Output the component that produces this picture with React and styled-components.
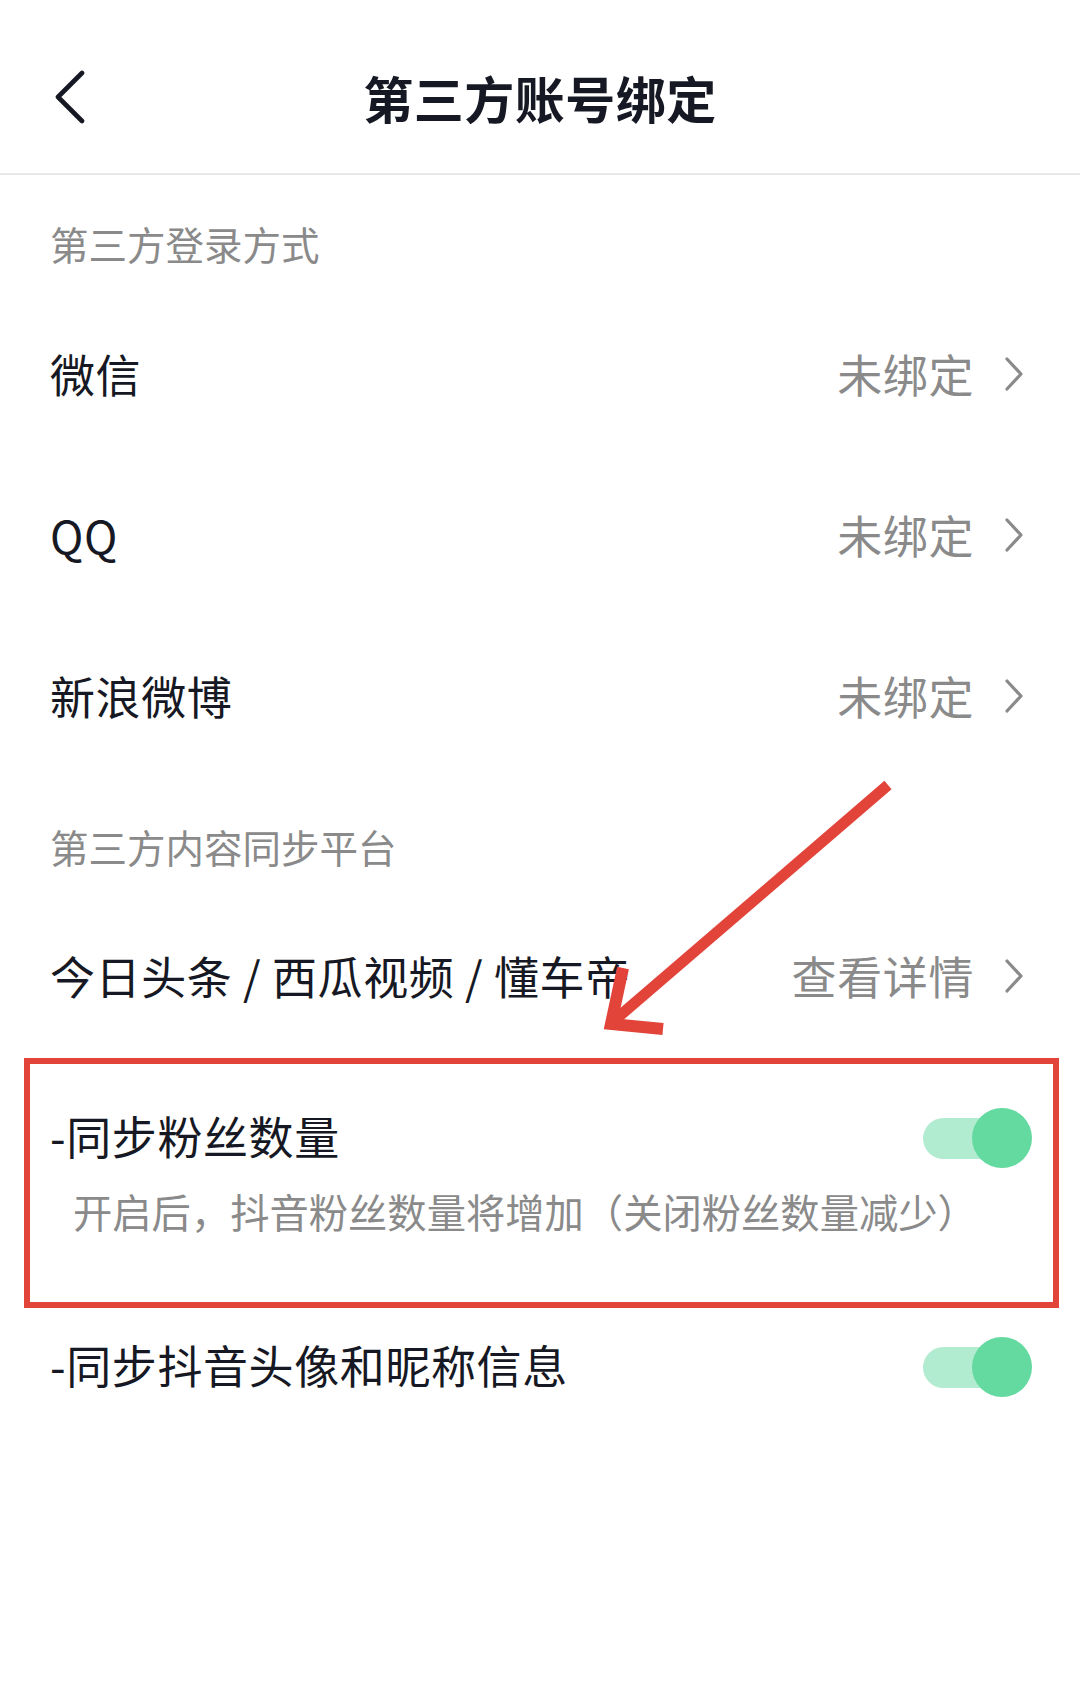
import React from 'react';
import styled, { createGlobalStyle } from 'styled-components';

const GlobalStyle = createGlobalStyle`
  html, body {
    margin: 0;
    padding: 0;
    background: #ffffff;
  }
  body {
    font-family: "Noto Sans CJK SC", "Noto Sans", sans-serif;
    color: #161823;
  }
`;

const Page = styled.div`
  position: relative;
  width: 1080px;
  min-height: 1693px;
  background: #ffffff;
  overflow: hidden;
`;

const Header = styled.header`
  position: relative;
  height: 152px;
  padding-top: 21px;
  display: flex;
  align-items: center;
  justify-content: center;
  border-bottom: 2px solid #e8e8e8;
`;

const BackButton = styled.div`
  position: absolute;
  left: 52px;
  top: 70px;
  width: 36px;
  height: 54px;
  display: flex;
  align-items: center;
  justify-content: center;
`;

const Title = styled.h1`
  margin: 0;
  font-size: 50px;
  font-weight: 700;
  line-height: 60px;
  letter-spacing: 0.5px;
  color: #161823;
`;

const SectionTitle = styled.div`
  padding: ${(p) => p.$top}px 50px ${(p) => p.$bottom}px;
  font-size: 38.5px;
  line-height: 46px;
  color: #8a8a8a;
`;

const Row = styled.div`
  height: 161px;
  box-sizing: border-box;
  display: flex;
  align-items: center;
  justify-content: space-between;
  padding: 0 56px 6px 50px;
`;

const RowLabel = styled.span`
  font-size: 45px;
  line-height: 56px;
  letter-spacing: 0.6px;
  color: #161823;
`;

const RowValue = styled.span`
  display: flex;
  align-items: center;
  gap: 30px;
  font-size: 45px;
  line-height: 56px;
  letter-spacing: 0.6px;
  color: #8a8a8a;
`;

const ToggleItem = styled.div`
  position: relative;
  padding: ${(p) => p.$top}px 48px ${(p) => p.$bottom}px 50px;
`;

const Highlight = styled.div`
  position: relative;

  &::after {
    content: "";
    position: absolute;
    top: -1px;
    left: 24px;
    right: 21px;
    bottom: -6px;
    border: 6px solid #e2443a;
    pointer-events: none;
  }
`;

const ToggleHead = styled.div`
  display: flex;
  align-items: center;
  justify-content: space-between;
  height: 60px;
`;

const ToggleLabel = styled.span`
  padding-bottom: 5px;
  font-size: 45px;
  line-height: 56px;
  letter-spacing: 0.6px;
  color: #161823;
`;

const Description = styled.div`
  margin-top: 18px;
  padding-left: 23px;
  font-size: 39.3px;
  line-height: 50px;
  color: #8a8a8a;
`;

const Switch = styled.div`
  position: relative;
  width: 109px;
  height: 60px;
  display: flex;
  align-items: center;
  justify-content: flex-end;

  &::before {
    content: "";
    position: absolute;
    left: 0;
    top: 10px;
    width: 100px;
    height: 41px;
    border-radius: 21px;
    background: #b1ecd0;
  }
`;

const Knob = styled.span`
  position: relative;
  width: 60px;
  height: 60px;
  border-radius: 50%;
  background: #64d9a0;
`;

const ArrowLayer = styled.svg`
  position: absolute;
  left: 0;
  top: 0;
  pointer-events: none;
`;

const Chevron = () => (
  <svg width="20" height="34" viewBox="0 0 20 34">
    <polyline points="3,2 17,17 3,32" fill="none" stroke="#8a8a8a" strokeWidth="3.2" strokeLinecap="round" strokeLinejoin="round" />
  </svg>
);

const BackIcon = () => (
  <svg width="34" height="54" viewBox="0 0 34 54">
    <polyline points="29,3 5,27 29,51" fill="none" stroke="#161823" strokeWidth="4.6" strokeLinecap="round" strokeLinejoin="round" />
  </svg>
);

const bindRows = ['微信', 'QQ', '新浪微博'];

export default function App() {
  return (
    <>
      <GlobalStyle />
      <Page>
        <Header>
          <BackButton>
            <BackIcon />
          </BackButton>
          <Title>第三方账号绑定</Title>
        </Header>

        <SectionTitle $top={45} $bottom={30}>第三方登录方式</SectionTitle>
        {bindRows.map((name) => (
          <Row key={name}>
            <RowLabel>{name}</RowLabel>
            <RowValue>
              未绑定
              <Chevron />
            </RowValue>
          </Row>
        ))}

        <SectionTitle $top={44} $bottom={29}>第三方内容同步平台</SectionTitle>
        <Row>
          <RowLabel>今日头条 / 西瓜视频 / 懂车帝</RowLabel>
          <RowValue>
            查看详情
            <Chevron />
          </RowValue>
        </Row>

        <Highlight>
          <ToggleItem $top={49} $bottom={66}>
            <ToggleHead>
              <ToggleLabel>-同步粉丝数量</ToggleLabel>
              <Switch>
                <Knob />
              </Switch>
            </ToggleHead>
            <Description>开启后，抖音粉丝数量将增加（关闭粉丝数量减少）</Description>
          </ToggleItem>
        </Highlight>

        <ToggleItem $top={35} $bottom={40}>
          <ToggleHead>
            <ToggleLabel>-同步抖音头像和昵称信息</ToggleLabel>
            <Switch>
              <Knob />
            </Switch>
          </ToggleHead>
        </ToggleItem>

        <ArrowLayer width="1080" height="1693" viewBox="0 0 1080 1693">
          <line x1="888" y1="785" x2="616" y2="1019" stroke="#e2443a" strokeWidth="11" />
          <polyline points="623,968 611,1024 663,1029" fill="none" stroke="#e2443a" strokeWidth="12" strokeLinejoin="miter" />
        </ArrowLayer>
      </Page>
    </>
  );
}
